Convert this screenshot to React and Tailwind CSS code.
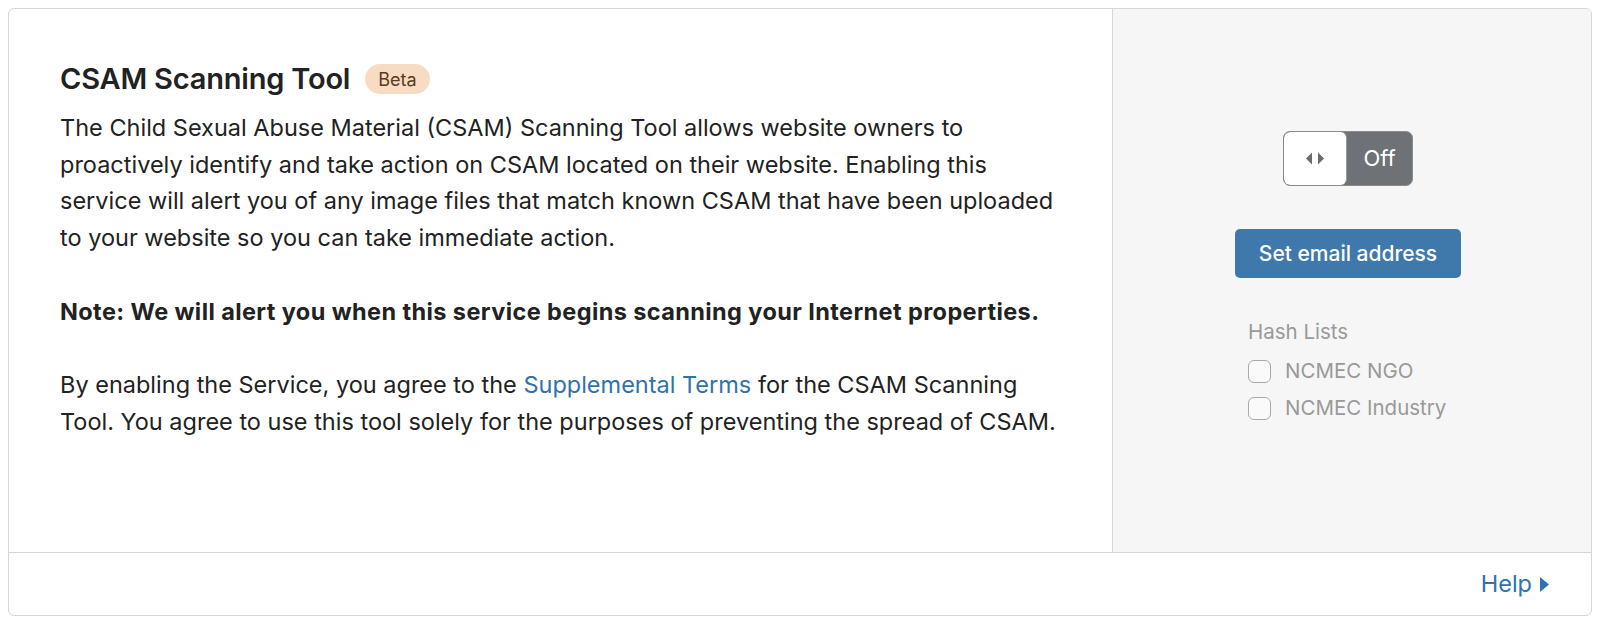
import React from 'react';

const Arrows = () => (
  <svg width="20" height="13" viewBox="0 0 20 13" fill="#6b6b6b">
    <path d="M7 0.5 L7 12.5 L1 6.5 Z" />
    <path d="M13 0.5 L13 12.5 L19 6.5 Z" />
  </svg>
);

const Checkbox = ({ label }) => (
  <label className="flex items-center gap-[14px] h-[37px] whitespace-nowrap">
    <span className="shrink-0 w-[23px] h-[23px] rounded-[6px] border-[1.5px] border-[#a9a9a9] bg-[#fafafa]" />
    <span>{label}</span>
  </label>
);

export default function App() {
  return (
    <div className="p-2 bg-white" style={{ fontFamily: 'Inter, "Noto Sans", sans-serif' }}>
      <div className="flex flex-col h-[608px] border border-[#d6d6d6] rounded-[6px] overflow-hidden">
        <div className="flex h-[544px] border-b border-[#d6d6d6]">
          {/* left column */}
          <div className="w-[1103px] pl-[51px] pt-[52px] text-[#222222]">
            <div className="flex items-center gap-[15px] h-[36px]">
              <h2 className="text-[29px] leading-[36px] font-semibold tracking-[-0.2px]">CSAM Scanning Tool</h2>
              <span className="px-[13px] h-[30px] flex items-center rounded-full bg-[#f7dcc3] text-[#5a3a20] text-[18px]">Beta</span>
            </div>
            <div className="mt-[13px] text-[23.5px] leading-[36.7px] w-[1012px]">
              <p>
                The Child Sexual Abuse Material (CSAM) Scanning Tool allows website owners to proactively identify and take action on CSAM located on their website. Enabling this service will alert you of any image files that match known CSAM that have been uploaded to your website so you can take immediate action.
              </p>
              <p className="mt-[36.7px] font-bold tracking-[0.4px] whitespace-nowrap">
                Note: We will alert you when this service begins scanning your Internet properties.
              </p>
              <p className="mt-[36.7px]">
                By enabling the Service, you agree to the{' '}
                <a className="text-[#2f72ad]">Supplemental Terms</a> for the CSAM Scanning Tool. You agree to use this tool solely for the purposes of preventing the spread of CSAM.
              </p>
            </div>
          </div>

          {/* right column */}
          <div className="flex-1 bg-[#f6f6f6] border-l border-[#d6d6d6] flex flex-col items-center pt-[122px] pr-[8px]">
            <div className="flex h-[55px] w-[130px] rounded-[7px] border border-[#8c8c8c] bg-[#6e7276] overflow-hidden">
              <div className="w-[63px] bg-white rounded-[6px] border-r border-[#9a9a9a] flex items-center justify-center">
                <Arrows />
              </div>
              <div className="flex-1 flex items-center justify-center text-white text-[22px]">Off</div>
            </div>
            <button className="mt-[43px] w-[226px] h-[49px] rounded-[5px] bg-[#3f79ab] text-white text-[21px] font-medium">
              Set email address
            </button>
            <div className="mt-[40px] w-[200px] text-[#999999] text-[20.5px]">
              <div className="leading-[28px]">Hash Lists</div>
              <div className="mt-[7px]">
                <Checkbox label="NCMEC NGO" />
                <Checkbox label="NCMEC Industry" />
              </div>
            </div>
          </div>
        </div>

        {/* footer */}
        <div className="flex-1 flex items-center justify-end pr-[42px]">
          <a className="flex items-center gap-[8px] text-[#2f72ad] text-[23.5px]">
            Help
            <svg width="9" height="15" viewBox="0 0 9 15" fill="#2f72ad">
              <path d="M0 0 L9 7.5 L0 15 Z" />
            </svg>
          </a>
        </div>
      </div>
    </div>
  );
}
